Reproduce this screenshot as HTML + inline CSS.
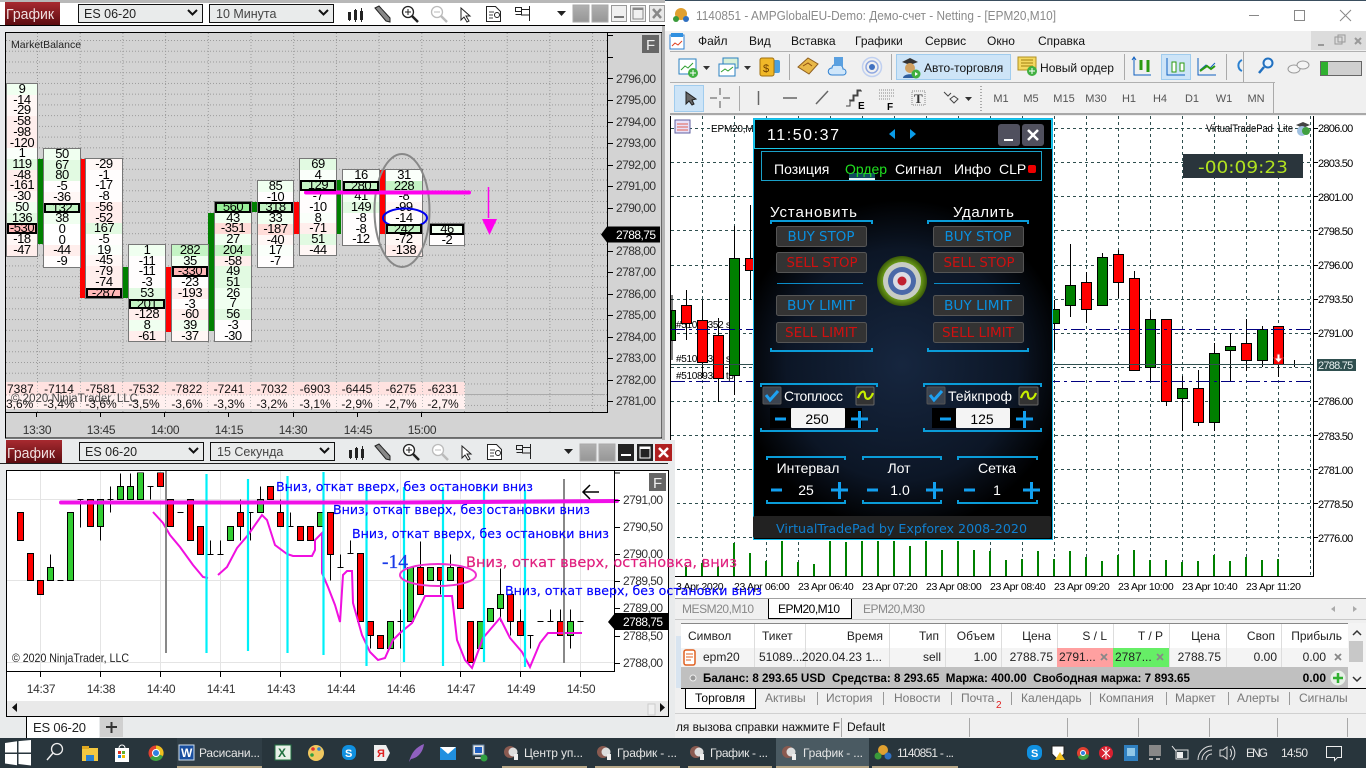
<!DOCTYPE html>
<html><head><meta charset="utf-8"><title>Trading</title>
<style>
html,body{margin:0;padding:0;width:1366px;height:768px;overflow:hidden;background:#f0f0f0}
svg{position:absolute;left:0;top:0}
text{font-family:"Liberation Sans","DejaVu Sans",sans-serif;font-size:12px;fill:#000;white-space:pre}
.ax{font-size:12px;fill:#333;letter-spacing:-.55px}
.tm{font-size:12px;fill:#333;letter-spacing:-.3px;text-anchor:middle}
.sum{font-size:12px;fill:#111;text-anchor:middle}
.mp{font-size:11px;letter-spacing:-.75px;fill:#000}
.dt{font-size:10.5px;letter-spacing:-.35px;fill:#000}
.m{font-size:12px;fill:#111}
.tf{font-size:11px;fill:#555;text-anchor:middle}
.h{font-size:12px;fill:#222;text-anchor:end}
.hl{font-size:12px;fill:#222}
.tab{font-size:12px;fill:#777}
.w{fill:#fff;font-size:14px}
.wc{fill:#fff;font-size:14px;text-anchor:middle}
.bb{fill:#0a90e0;font-size:13px;text-anchor:middle;font-family:"DejaVu Sans",sans-serif}
.br{fill:#d01010;font-size:13px;text-anchor:middle;font-family:"DejaVu Sans",sans-serif}
.tk{fill:#e6e6e6;font-size:12px}
.blue{fill:#0000ff;font-family:"DejaVu Sans",sans-serif;font-size:12px;stroke:#0000ff;stroke-width:.15}
.col{position:absolute;border:1px solid #777;box-sizing:content-box;font:13px/10.73px "Liberation Sans",sans-serif;letter-spacing:-.45px;color:#000;text-align:center;background:#fff}
.col i{display:block;height:10.73px;font-style:normal;white-space:nowrap}
.g0{background:#fafffa}.g1{background:#f0fff0}.g2{background:#e2fae2}.g3{background:#c4f4c4}.g4{background:#98ee98}
.r0{background:#fffdfd}.r1{background:#fff7f5}.r2{background:#ffeeec}.r3{background:#ffdcd8}.r4{background:#ffb8b8}
.col i.x{outline:2px solid #000;outline-offset:-2px;position:relative;z-index:2}
</style></head><body>

<svg width="1366" height="768" viewBox="0 0 1366 768">
<defs>
<radialGradient id="pg" gradientUnits="userSpaceOnUse" cx="902" cy="365" r="165"><stop offset="0" stop-color="#16263f"/><stop offset=".7" stop-color="#0c1626"/><stop offset="1" stop-color="#000"/></radialGradient>
<linearGradient id="rd" x1="0" y1="0" x2="0" y2="1"><stop offset="0" stop-color="#a82a30"/><stop offset="1" stop-color="#5c0c10"/></linearGradient>
<linearGradient id="gs" x1="0" y1="0" x2="0" y2="1"><stop offset="0" stop-color="#b0b0b0"/><stop offset="1" stop-color="#969696"/></linearGradient>
<pattern id="hg" x="6" y="40" width="3" height="10.733" patternUnits="userSpaceOnUse"><rect width="1" height="1" fill="#9a9a9a"/></pattern>
<pattern id="vg" x="37" y="33" width="42.7" height="3" patternUnits="userSpaceOnUse"><rect width="1" height="1" fill="#9a9a9a"/></pattern>
<clipPath id="c1"><rect x="6" y="33" width="601" height="379"/></clipPath>
<clipPath id="c2"><rect x="8" y="472" width="606" height="199"/></clipPath>
<clipPath id="c3"><rect x="676" y="570" width="690" height="30"/></clipPath>
<radialGradient id="tg"><stop offset="0" stop-color="#a0c040"/><stop offset=".75" stop-color="#6a9a18"/><stop offset="1" stop-color="#3a5a08"/></radialGradient>
</defs>

<!-- MT WINDOW -->
<rect x="665" y="0" width="701" height="768" fill="#f0f0f0"/>
<rect x="665" y="0" width="701" height="1" fill="#3a4e5e"/>
<rect x="665" y="1" width="701" height="30" fill="#fff"/>
<circle cx="681" cy="14" r="6" fill="#e0a030"/><circle cx="676" cy="19" r="3" fill="#3a9a3a"/><circle cx="686" cy="19" r="3" fill="#3070c0"/>
<text x="696" y="20" style="font-size:12.5px;fill:#8a8a8a" textLength="360" lengthAdjust="spacingAndGlyphs">1140851 - AMPGlobalEU-Demo: Демо-счет - Netting - [EPM20,M10]</text>
<path d="M1249 15.5h10" stroke="#888" fill="none"/><rect x="1294.5" y="10.5" width="10" height="10" fill="none" stroke="#888"/><path d="M1340 10l11 11M1351 10l-11 11" stroke="#888" fill="none"/>
<!-- menu -->
<rect x="670" y="35" width="14" height="14" fill="#fff" stroke="#3080d0"/><rect x="671" y="33" width="12" height="4" fill="#3090e0"/><path d="M672 46l3-3 3 2 4-4" stroke="#e04020" fill="none"/>
<text class="m" x="698" y="45">Файл</text><text class="m" x="749" y="45">Вид</text><text class="m" x="791" y="45">Вставка</text><text class="m" x="855" y="45">Графики</text><text class="m" x="925" y="45">Сервис</text><text class="m" x="987" y="45">Окно</text><text class="m" x="1038" y="45">Справка</text>
<rect x="1311" y="31" width="55" height="19" fill="#dcdcdc"/><path d="M1318 45h6" stroke="#999" stroke-width="2"/><rect x="1335" y="37" width="7" height="7" fill="none" stroke="#999"/><rect x="1338" y="35" width="7" height="7" fill="none" stroke="#999"/><path d="M1355 38l6 6M1361 38l-6 6" stroke="#999" stroke-width="2"/>
<rect x="670" y="51" width="696" height="1" fill="#b0b0b0"/>
<!-- toolbar1 -->
<rect x="679" y="59" width="17" height="15" fill="#fff" stroke="#2a80c0"/><path d="M681 70l4-4 3 2 5-5" stroke="#30a030" fill="none"/><circle cx="693" cy="73" r="5" fill="#40b040"/><path d="M690 73h6M693 70v6" stroke="#fff"/>
<path d="M703 66h7l-3.500 4z" fill="#333"/>
<rect x="723" y="58" width="15" height="10" fill="#d8f0d8" stroke="#2a80c0"/><rect x="719" y="64" width="16" height="12" fill="#fff" stroke="#2a80c0"/><path d="M721 72l4-3 3 2 5-4" stroke="#30a030" fill="none"/>
<path d="M744 66h7l-3.500 4z" fill="#333"/>
<rect x="768" y="60" width="12" height="13" fill="#4aa0e0" rx="2"/><rect x="760" y="58" width="14" height="18" fill="#f0b828" stroke="#a07010" rx="2"/><text x="763" y="72" style="font-size:11px;fill:#704000">$</text>
<rect x="789" y="54" width="1" height="26" fill="#aaa"/>
<path d="M798 67l10-9 10 6-9 10z" fill="#e8b848" stroke="#906020"/><path d="M803 66l5-3 4 3" stroke="#905010" fill="none"/>
<path d="M832 75c-5 0-5-7 0-7 0-3 3-4 5-3 3-1 6 1 6 4 4 0 4 6 0 6z" fill="#cfe6fa" stroke="#3080d0"/><rect x="834" y="57" width="9" height="9" fill="#5aa0e0"/>
<circle cx="872" cy="67" r="3" fill="#4070c0"/><circle cx="872" cy="67" r="6" fill="none" stroke="#90a8e0" stroke-width="1.500"/><circle cx="872" cy="67" r="9.500" fill="none" stroke="#c0d0f0" stroke-width="1.500"/>
<rect x="891" y="54" width="1" height="26" fill="#aaa"/>
<rect x="896.500" y="54.500" width="114" height="25" fill="#cde4f7" stroke="#a0ccee"/>
<path d="M902 62l8-4 8 4-8 3z" fill="#333"/><circle cx="910" cy="68" r="5" fill="#d0a060"/><path d="M903 78c0-5 14-5 14 0z" fill="#3060a0"/><circle cx="916" cy="74" r="4.500" fill="#40b040"/><path d="M915 72l3 2-3 2z" fill="#fff"/>
<text x="924" y="72" class="m">Авто-торговля</text>
<rect x="1018" y="57" width="18" height="13" fill="#f4d860" stroke="#b09020"/><path d="M1021 60h12M1021 63h12M1021 66h12" stroke="#a08010"/><circle cx="1032" cy="71" r="5" fill="#40b040"/><path d="M1029 71h6M1032 68v6" stroke="#fff"/>
<text x="1040" y="72" class="m" textLength="74" lengthAdjust="spacingAndGlyphs">Новый ордер</text>
<rect x="1124" y="54" width="1" height="26" fill="#aaa"/>
<path d="M1134 58v17h17M1132 60l2-3 2 3" stroke="#1060c0" fill="none"/><path d="M1141 60v10M1148 60v12" stroke="#2a9a10" stroke-width="3"/>
<rect x="1161.500" y="54.500" width="29" height="25" fill="#cde4f7" stroke="#a0ccee"/><path d="M1167 58v17h18" stroke="#1060c0" fill="none"/><rect x="1172" y="62" width="4" height="10" fill="#fff" stroke="#2a9a10"/><rect x="1180" y="63" width="4" height="8" fill="#fff" stroke="#2a9a10"/>
<path d="M1198 58v17h18M1200 70l6-5 4 3 5-5" stroke="#1060c0" fill="none"/><path d="M1200 71l7-5 4 3 4-3" stroke="#2a9a10" stroke-width="2" fill="none"/>
<rect x="1226" y="54" width="1" height="26" fill="#aaa"/>
<path d="M1242 60a6 6 0 0 0 0 11" stroke="#2a80d0" stroke-width="2" fill="none"/>
<rect x="1243" y="52" width="1" height="30" fill="#aaa"/>
<circle cx="1268" cy="63" r="4.500" fill="#e8f4ff" stroke="#2070c0" stroke-width="2"/><path d="M1264 67l-5 6" stroke="#2070c0" stroke-width="2.500"/>
<ellipse cx="1294" cy="69" rx="6" ry="4" fill="#f4f4f4" stroke="#999"/><ellipse cx="1303" cy="65" rx="6" ry="4" fill="#f4f4f4" stroke="#999"/>
<rect x="1320.500" y="61.500" width="41" height="14" fill="#cfcfcf" stroke="#666"/><rect x="1321" y="62" width="7" height="13" fill="#30b030"/>
<!-- toolbar2 -->
<rect x="670" y="82" width="605" height="1" fill="#b0b0b0"/><rect x="1273" y="83" width="1" height="30" fill="#aaa"/>
<rect x="674.500" y="85.500" width="29" height="26" fill="#cde4f7" stroke="#a0ccee"/><path d="M686 92l0 12 3-3 3 4 2-1-2-4 4-1z" fill="#666" stroke="#222"/>
<path d="M710 98h7M723 98h7M720 88v7M720 101v7" stroke="#555" stroke-width="1"/>
<rect x="739" y="86" width="1" height="25" fill="#aaa"/>
<path d="M758.500 91v14M783 98h14M816 104l12-13" stroke="#666" stroke-width="1.500" fill="none"/>
<path d="M846 106h4v-5h4v-5h4v-5h4M849 100h4v-5h4v-5h4" stroke="#444" fill="none"/><text x="858" y="109" style="font-size:10px;font-weight:700">E</text>
<path d="M879 90h15M879 93h15M879 96h15M879 99h12" stroke="#888" stroke-dasharray="1 1"/><text x="887" y="110" style="font-size:10px;font-weight:700">F</text>
<rect x="912" y="91" width="13" height="14" fill="none" stroke="#888" stroke-dasharray="1 1"/><text x="914" y="103" style="font-family:'Liberation Serif';font-size:13px;font-weight:700;fill:#333">T</text>
<path d="M944 92l4 4 3-3M950 99l4 4 4-4-4-3z" stroke="#444" fill="none"/><path d="M965 97h7l-3.500 4z" fill="#333"/>
<path d="M981 86v26" stroke="#aaa" stroke-dasharray="1 2" stroke-width="2"/>
<text class="tf" x="1001" y="102">M1</text><text class="tf" x="1031" y="102">M5</text><text class="tf" x="1064" y="102">M15</text><text class="tf" x="1096" y="102">M30</text><text class="tf" x="1129" y="102">H1</text><text class="tf" x="1160" y="102">H4</text><text class="tf" x="1192" y="102">D1</text><text class="tf" x="1224" y="102">W1</text><text class="tf" x="1256" y="102">MN</text>
<rect x="670" y="113" width="696" height="2" fill="#a8a8a8"/>

<!-- MT CHART -->
<rect x="670" y="116" width="696" height="483" fill="#fff"/>
<rect x="670" y="116" width="1" height="460" fill="#000"/>
<path d="M702.500 116V576M734.500 116V576M766.500 116V576M798.500 116V576M830.500 116V576M862.500 116V576M894.500 116V576M926.500 116V576M958.500 116V576M990.500 116V576M1022.500 116V576M1054.500 116V576M1086.500 116V576M1118.500 116V576M1150.500 116V576M1182.500 116V576M1214.500 116V576M1246.500 116V576M1278.500 116V576M1310.500 116V576M671 128.500H1313M671 162.500H1313M671 196.500H1313M671 230.500H1313M671 265.500H1313M671 299.500H1313M671 333.500H1313M671 367.500H1313M671 401.500H1313M671 435.500H1313M671 469.500H1313M671 503.500H1313M671 537.500H1313" stroke="#2f4f4f" stroke-dasharray="3 3" fill="none"/>
<text x="676" y="328" style="font-size:10px;letter-spacing:-.3px">#51089352 sl</text><text x="676" y="362" style="font-size:10px;letter-spacing:-.3px">#51089352 sl</text><text x="676" y="379" style="font-size:10px;letter-spacing:-.3px">#51089352 tp</text>
<path d="M686.500 290V340M702.500 300V378M718.500 318V402M734.500 226V395M750.500 205V300M1070.500 244V317M1086.500 272V323M1102.500 253V305M1118.500 250V298M1134.500 271V370M1150.500 310V382M1166.500 319V406M1182.500 376V431M1198.500 370V426M1214.500 343V431M1230.500 333V382M1246.500 319V371M1262.500 326V367M1278.500 326V377M1294.500 360V367M1289 364.500H1300M1054.500 300V350M672 295V360" stroke="#000" fill="none"/>
<path d="M681.500 305.500h10v18h-10zM697.500 320.500h10v42h-10zM713.500 335.500h10v43h-10zM745.500 258.500h10v12h-10zM1081.500 282.500h10v27h-10zM1113.500 254.500h10v28h-10zM1129.500 278.500h10v92h-10zM1161.500 319.500h10v82h-10zM1193.500 388.500h10v34h-10zM1241.500 343.500h10v17h-10zM1273.500 326.500h10v38h-10z" fill="#f00" stroke="#000"/>
<path d="M671.500 310.500h4v30h-4zM729.500 258.500h10v117h-10zM1049.500 309.500h10v14h-10zM1065.500 285.500h10v20h-10zM1097.500 257.500h10v48h-10zM1145.500 319.500h10v48h-10zM1177.500 388.500h10v10h-10zM1209.500 353.500h10v69h-10zM1225.500 346.500h10v4h-10zM1257.500 329.500h10v31h-10z" fill="#008000" stroke="#000"/>
<path d="M1274 358h3v-4h3v4h3l-4.500 5z" fill="#fff" stroke="#f02020"/>
<path d="M671 329.500H1313M671 381.500H1313" stroke="#000080" stroke-dasharray="14 4 3 4" fill="none"/>
<path d="M671 364.500H1313" stroke="#2f4f4f" fill="none"/>
<!-- volumes -->
<path d="M686 565V576M702 563V576M718 566V576M734 543V576M750 553V576M766 561V576M782 541V576M798 562V576M814 564V576M830 541V576M846 542V576M862 541V576M878 541V576M894 541V576M910 546V576M926 541V576M942 550V576M958 541V576M974 550V576M990 551V576M1006 560V576M1022 559V576M1038 551V576M1054 559V576M1070 551V576M1086 557V576M1102 561V576M1118 555V576M1134 550V576M1150 560V576M1166 560V576M1182 562V576M1198 561V576M1214 555V576M1230 561V576M1246 557V576M1262 560V576M1278 559V576" stroke="#008000" stroke-width="2" fill="none"/>
<rect x="671" y="576" width="642" height="1" fill="#000"/>
<rect x="1313" y="116" width="1" height="461" fill="#000"/>
<path d="M1313 128.500h5M1313 162.500h5M1313 196.500h5M1313 230.500h5M1313 265.500h5M1313 299.500h5M1313 333.500h5M1313 401.500h5M1313 435.500h5M1313 469.500h5M1313 503.500h5M1313 537.500h5" stroke="#000"/>
<g class="mp"><text class="mp" x="1318" y="132">2806.00</text><text class="mp" x="1318" y="167">2803.50</text><text class="mp" x="1318" y="201">2801.00</text><text class="mp" x="1318" y="235">2798.50</text><text class="mp" x="1318" y="269">2796.00</text><text class="mp" x="1318" y="303">2793.50</text><text class="mp" x="1318" y="337">2791.00</text><text class="mp" x="1318" y="405">2786.00</text><text class="mp" x="1318" y="440">2783.50</text><text class="mp" x="1318" y="474">2781.00</text><text class="mp" x="1318" y="508">2778.50</text><text class="mp" x="1318" y="542">2776.00</text></g>
<rect x="1317" y="359" width="39" height="12" fill="#2f4f4f"/><text class="mp" x="1318" y="369" style="fill:#e8f0f0">2788.75</text>
<g clip-path="url(#c3)"><text class="dt" x="676" y="590">3 Apr 2020</text></g>
<text class="dt" x="734" y="590">23 Apr 06:00</text><text class="dt" x="798" y="590">23 Apr 06:40</text><text class="dt" x="862" y="590">23 Apr 07:20</text><text class="dt" x="926" y="590">23 Apr 08:00</text><text class="dt" x="990" y="590">23 Apr 08:40</text><text class="dt" x="1054" y="590">23 Apr 09:20</text><text class="dt" x="1118" y="590">23 Apr 10:00</text><text class="dt" x="1182" y="590">23 Apr 10:40</text><text class="dt" x="1246" y="590">23 Apr 11:20</text>
<rect x="675" y="120" width="15" height="13" fill="#e8e0f8" stroke="#6060a0"/><path d="M677 124h11M677 127h11M677 130h11" stroke="#e06050"/>
<text x="711" y="132" style="font-size:10px;letter-spacing:-.2px">EPM20,M10</text>
<text x="1206" y="132" textLength="87" lengthAdjust="spacingAndGlyphs" style="font-size:11px">VirtualTradePad  Lite</text>
<path d="M1296 125l7-3 7 3-7 3z" fill="#444"/><circle cx="1302" cy="131" r="5" fill="#a0c0e0"/><circle cx="1306" cy="131" r="4" fill="#40a040"/>
<rect x="1183" y="154" width="120" height="24" fill="#2a353c"/>
<text x="1198" y="173" style="font-family:'DejaVu Sans',sans-serif;font-size:17px;fill:#b0e020" textLength="90" lengthAdjust="spacingAndGlyphs">-00:09:23</text>

<!-- PANEL -->
<rect x="753.500" y="118.500" width="299" height="421" fill="url(#pg)" stroke="#12b8e8"/>
<rect x="754.500" y="119.500" width="297" height="29" fill="#000" stroke="#18c8e8"/>
<text x="767" y="140" style="font-size:16px;fill:#fff" textLength="72">11:50:37</text>
<path d="M889 134l6-5v10zM916 134l-6-5v10z" fill="#0a9ce8"/>
<rect x="998" y="124" width="22" height="22" rx="3" fill="#50505e"/><rect x="1004" y="139" width="9" height="2" fill="#fff"/>
<rect x="1022" y="124" width="22" height="22" rx="3" fill="#50505e"/><path d="M1028 130l10 10M1038 130l-10 10" stroke="#fff" stroke-width="2.500"/>
<rect x="761.500" y="151.500" width="280" height="29" fill="#000" stroke="#1aa0c8"/>
<rect x="849" y="173" width="26" height="6" fill="#124a5e"/><rect x="849" y="178" width="26" height="2" fill="#e8f4f8"/>
<g style="font-size:14px"><text class="w" x="774" y="174">Позиция</text><text x="845" y="174" style="font-size:14px;fill:#20e020">Ордер</text><text class="w" x="895" y="174">Сигнал</text><text class="w" x="954" y="174">Инфо</text><text class="w" x="999" y="174">CLP</text></g>
<rect x="1028" y="165" width="8" height="8" rx="2" fill="#f00000"/>
<text class="w" x="770" y="217" style="font-size:15px" textLength="87">Установить</text><text class="w" x="953" y="217" style="font-size:15px" textLength="61">Удалить</text>
<path d="M771 224v-3h101v3M928 224v-3h100v3M771 348v3h101v-3M928 348v3h100v-3M761 387v-3h116v3M924 387v-3h117v3M761 428v3h116v-3M924 428v3h117v-3M767 460v-3h78v3M863 460v-3h78v3M958 460v-3h79v3M767 500v3h78v-3M863 500v3h78v-3M958 500v3h79v-3" stroke="#0a9cd8" stroke-width="2" fill="none"/>
<path d="M777 283.500h86M934 283.500h86" stroke="#0a8cc8" fill="none"/>
<g fill="#333" stroke="#555"><rect x="776.500" y="226.500" width="90" height="20" rx="2"/><rect x="776.500" y="252.500" width="90" height="20" rx="2"/><rect x="776.500" y="295.500" width="90" height="20" rx="2"/><rect x="776.500" y="322.500" width="90" height="20" rx="2"/><rect x="933.500" y="226.500" width="90" height="20" rx="2"/><rect x="933.500" y="252.500" width="90" height="20" rx="2"/><rect x="933.500" y="295.500" width="90" height="20" rx="2"/><rect x="933.500" y="322.500" width="90" height="20" rx="2"/></g>
<text class="bb" x="821" y="241" textLength="67" lengthAdjust="spacingAndGlyphs">BUY STOP</text><text class="br" x="822" y="267" textLength="71" lengthAdjust="spacingAndGlyphs">SELL STOP</text><text class="bb" x="821" y="310" textLength="68" lengthAdjust="spacingAndGlyphs">BUY LIMIT</text><text class="br" x="821" y="337" textLength="72" lengthAdjust="spacingAndGlyphs">SELL LIMIT</text>
<text class="bb" x="978" y="241" textLength="67" lengthAdjust="spacingAndGlyphs">BUY STOP</text><text class="br" x="979" y="267" textLength="71" lengthAdjust="spacingAndGlyphs">SELL STOP</text><text class="bb" x="978" y="310" textLength="68" lengthAdjust="spacingAndGlyphs">BUY LIMIT</text><text class="br" x="978" y="337" textLength="72" lengthAdjust="spacingAndGlyphs">SELL LIMIT</text>
<circle cx="902" cy="281" r="25" fill="url(#tg)"/><circle cx="902" cy="281" r="19" fill="#c8ccc4"/><circle cx="902" cy="281" r="14" fill="#4a68a8"/><circle cx="902" cy="281" r="9" fill="#dcdce4"/><circle cx="902" cy="281" r="4.500" fill="#c02030"/>
<!-- sl/tp -->
<rect x="763" y="387" width="18" height="17" rx="1" fill="#3c4450" stroke="#555"/><path d="M766 395l4 5 8-9" stroke="#1ea0f0" stroke-width="3" fill="none"/>
<text class="w" x="784" y="401" textLength="59">Стоплосс</text>
<rect x="856" y="387" width="18" height="18" rx="1" fill="#333" stroke="#666"/><path d="M858 398c3-8 7-8 7-3s5 6 8-2" stroke="#c8f000" stroke-width="2.200" fill="none"/>
<rect x="927" y="387" width="18" height="17" rx="1" fill="#3c4450" stroke="#555"/><path d="M930 395l4 5 8-9" stroke="#1ea0f0" stroke-width="3" fill="none"/>
<text class="w" x="948" y="401" textLength="64">Тейкпроф</text>
<rect x="1019" y="387" width="19" height="18" rx="1" fill="#333" stroke="#666"/><path d="M1021 398c3-8 7-8 7-3s5 6 8-2" stroke="#c8f000" stroke-width="2.200" fill="none"/>
<rect x="770" y="408" width="92" height="20" fill="#000"/><rect x="932" y="408" width="92" height="20" fill="#000"/>
<rect x="791" y="408" width="54" height="20" rx="1" fill="#f4f4f4"/><rect x="956" y="408" width="54" height="20" rx="1" fill="#f4f4f4"/>
<text x="817" y="424" text-anchor="middle" style="font-size:14px">250</text><text x="982" y="424" text-anchor="middle" style="font-size:14px">125</text>
<path d="M775 419h11M851 419h17M859.500 411v17M940 419h11M1016 419h17M1024.500 411v17M771 490h11M831 490h17M839.500 482v17M867 490h11M926 490h17M934.500 482v17M964 490h11M1023 490h17M1031.500 482v17" stroke="#12a0f0" stroke-width="3" fill="none"/>
<text class="wc" x="808" y="473">Интервал</text><text class="wc" x="899" y="473">Лот</text><text class="wc" x="997" y="473">Сетка</text>
<text class="wc" x="806" y="495">25</text><text class="wc" x="900" y="495">1.0</text><text class="wc" x="997" y="495">1</text>
<rect x="753" y="516" width="298" height="22" rx="2" fill="#222"/>
<text x="776" y="533" style="font-family:'DejaVu Sans',sans-serif;font-size:12.5px;fill:#1080d0" textLength="251" lengthAdjust="spacingAndGlyphs">VirtualTradePad by Expforex 2008-2020</text>

<!-- MT bottom panel -->
<rect x="670" y="598" width="696" height="1" fill="#a0a0a0"/>
<rect x="670" y="599" width="696" height="20" fill="#f0f0f0"/>
<text x="682" y="613" style="font-size:12px;fill:#888" textLength="72">MESM20,M10</text>
<path d="M768 599h83v19h-83z" fill="#fff"/><path d="M768.500 599v19.500h83V599" fill="none" stroke="#000"/>
<text x="778" y="613" textLength="62">EPM20,M10</text>
<text x="863" y="613" style="fill:#888" textLength="62">EPM20,M30</text>
<path d="M1335 606l-4 3 4 3zM1353 606l4 3-4 3z" fill="#aaa"/>
<rect x="670" y="619" width="696" height="1" fill="#c8c8c8"/>
<rect x="681" y="623" width="667" height="25" fill="#fff"/>
<rect x="681" y="648" width="667" height="19" fill="#f4f4f4"/>
<path d="M754.500 623V667M805.500 623V667M889.500 623V667M945.500 623V667M1001.500 623V667M1057.500 623V667M1113.500 623V667M1169.500 623V667M1226.500 623V667M1281.500 623V667" stroke="#ddd" fill="none"/>
<rect x="681" y="623" width="685" height="1" fill="#888"/>
<text class="hl" x="688" y="640">Символ</text><text class="hl" x="762" y="640">Тикет</text><text class="h" x="883" y="640">Время</text><text class="h" x="939" y="640">Тип</text><text class="h" x="995" y="640">Объем</text><text class="h" x="1051" y="640">Цена</text><text class="h" x="1107" y="640">S / L</text><text class="h" x="1163" y="640">T / P</text><text class="h" x="1220" y="640">Цена</text><text class="h" x="1275" y="640">Своп</text><text class="h" x="1342" y="640">Прибыль</text>
<rect x="1057" y="648" width="56" height="19" fill="#ffa0a0"/><rect x="1113" y="648" width="56" height="19" fill="#66ee66"/>
<rect x="684" y="650" width="11" height="15" rx="2" fill="#fff" stroke="#e06020" stroke-width="1.500"/><path d="M686 654h7M686 657h7M686 660h5" stroke="#e06020"/>
<text class="hl" x="703" y="661">epm20</text><text class="hl" x="759" y="661">51089...</text><text class="h" x="882" y="661">2020.04.23 1...</text><text class="h" x="941" y="661">sell</text><text class="h" x="997" y="661">1.00</text><text class="h" x="1053" y="661">2788.75</text><text class="hl" x="1059" y="661">2791...</text><text class="hl" x="1115" y="661">2787...</text><text class="h" x="1221" y="661">2788.75</text><text class="h" x="1277" y="661">0.00</text><text class="h" x="1326" y="661">0.00</text>
<path d="M1101 654l6 6M1107 654l-6 6M1157 654l6 6M1163 654l-6 6M1335 654l6 6M1341 654l-6 6" stroke="#888" stroke-width="1.800"/>
<rect x="681" y="667" width="667" height="21" fill="#c0c0c0"/>
<rect x="681" y="688" width="685" height="1" fill="#000"/>
<circle cx="693" cy="678" r="3" fill="#999" stroke="#eee"/>
<text x="703" y="682" style="font-weight:700;font-size:12px" textLength="487" lengthAdjust="spacingAndGlyphs">Баланс: 8 293.65 USD  Средства: 8 293.65  Маржа: 400.00  Свободная маржа: 7 893.65</text>
<text class="h" x="1326" y="682" style="font-weight:700;fill:#000">0.00</text>
<circle cx="1338" cy="678" r="7.500" fill="#e8f0e8"/><path d="M1333 678h10M1338 673v10" stroke="#30b030" stroke-width="2.500"/>
<rect x="1348" y="623" width="18" height="65" fill="#f4f4f4"/><path d="M1353 635l4-4 4 4M1353 677l4 4 4-4" stroke="#333" stroke-width="1.500" fill="none"/><rect x="1349" y="641" width="14" height="21" fill="#c8c8c8"/>
<rect x="676" y="636" width="5" height="52" fill="#d8e4f0"/>
<rect x="670" y="689" width="696" height="24" fill="#f0f0f0"/>
<path d="M685 689h70v19h-70z" fill="#fff"/><path d="M685.500 689v19.500h70V689" fill="none" stroke="#000"/>
<text x="695" y="702">Торговля</text><text class="tab" x="765" y="702">Активы</text><text class="tab" x="826" y="702">История</text><text class="tab" x="894" y="702">Новости</text><text class="tab" x="961" y="702">Почта</text><text x="996" y="708" style="font-size:10px;fill:#e02020">2</text><text class="tab" x="1021" y="702">Календарь</text><text class="tab" x="1099" y="702">Компания</text><text class="tab" x="1175" y="702">Маркет</text><text class="tab" x="1237" y="702">Алерты</text><text class="tab" x="1299" y="702">Сигналы</text>
<path d="M817.500 692v13M883.500 692v13M951.500 692v13M1011.500 692v13M1090.500 692v13M1166.500 692v13M1228.500 692v13M1289.500 692v13" stroke="#999"/>
<rect x="670" y="713" width="696" height="1" fill="#d0d0d0"/>
<text x="676" y="731" style="font-size:12px;fill:#111" textLength="164" lengthAdjust="spacingAndGlyphs">ля вызова справки нажмите F</text><text x="847" y="731" style="fill:#111">Default</text>
<path d="M841.500 718v19M969.500 718v19M1067.500 718v19M1138.500 718v19M1209.500 718v19M1277.500 718v19M1347.500 718v19" stroke="#a8a8a8"/>

<!-- TOP LEFT WINDOW -->
<rect x="0" y="0" width="665" height="440" fill="#e9eaec"/>
<rect x="0" y="0" width="665" height="3" fill="#b8b8b8"/>
<rect x="0" y="3" width="665" height="22" fill="#fff"/>
<rect x="0" y="25" width="665" height="1" fill="#000"/>
<rect x="0" y="2" width="60" height="23" fill="url(#rd)"/><rect x="0" y="2" width="5" height="23" fill="#fff"/>
<text x="6" y="19" style="font-size:15px;fill:#f0e0e0" textLength="48" lengthAdjust="spacingAndGlyphs">График</text>
<rect x="78.500" y="4.500" width="124" height="18" fill="#e9ebeb" stroke="#111"/><text x="84" y="18" style="font-size:12.500px;fill:#222">ES 06-20</text><path d="M188 10l4.500 4.500L197 10" stroke="#111" stroke-width="2" fill="none"/>
<rect x="209.500" y="4.500" width="124" height="18" fill="#e9ebeb" stroke="#111"/><text x="216" y="18" style="font-size:12.500px;fill:#444">10 Минута</text><path d="M319 10l4.500 4.500L328 10" stroke="#111" stroke-width="2" fill="none"/>
<!-- toolbar icons -->
<path d="M349.500 12v9M355.500 9v13M361.500 8v14" stroke="#222" fill="none"/><path d="M348 12h3v8h-3zM354 10h3v10h-3zM360 11h3v9h-3z" fill="#222"/>
<path d="M375 8l4-2 11 12 0 4-4-1z" fill="#888" stroke="#222"/>
<circle cx="408" cy="12" r="5.500" fill="#fff" stroke="#222" stroke-width="1.300"/><path d="M405 12h6M408 9v6" stroke="#222"/><path d="M412 16l6 6" stroke="#222" stroke-width="2.500"/>
<circle cx="437" cy="12" r="5.500" fill="#fff" stroke="#bbb" stroke-width="1.300"/><path d="M434 12h6" stroke="#bbb"/><path d="M441 16l6 6" stroke="#bbb" stroke-width="2.500"/>
<path d="M461 8v12l3-3 3 5 2-1-3-5h4z" fill="#fff" stroke="#222"/>
<path d="M486.500 6.500h9l5 5v10h-14z" fill="#fff" stroke="#222"/><path d="M489 12h5M489 15h4M489 18h4" stroke="#444"/><circle cx="497" cy="15" r="2.500" fill="#fff" stroke="#222"/>
<path d="M515.500 7.500h6v4h-6zM515.500 14.500h6v-3M521 9.500h8M529.500 6v15M521 15h8" stroke="#222" fill="none"/>
<path d="M557 11h9l-4.500 5z" fill="#222"/>
<rect x="573" y="5" width="16" height="17" fill="url(#gs)" stroke="#aaa"/><rect x="592" y="5" width="16" height="17" fill="url(#gs)" stroke="#aaa"/>
<rect x="611.500" y="5.500" width="15" height="16" fill="#f0f0f0" stroke="#999"/><rect x="614" y="16" width="10" height="2" fill="#777"/>
<rect x="630.500" y="5.500" width="15" height="16" fill="#f0f0f0" stroke="#999"/><rect x="633" y="8" width="10" height="11" fill="none" stroke="#888"/><rect x="633" y="8" width="10" height="2" fill="#888"/>
<rect x="649.500" y="5.500" width="15" height="16" fill="#e8e8e8" stroke="#999"/><path d="M653 9l8 9M661 9l-8 9" stroke="#888" stroke-width="2.500"/>
<!-- chart 1 -->
<rect x="5.500" y="32.500" width="656.500" height="405.500" fill="#d3d3d3" stroke="#000"/>
<rect x="6" y="40" width="601" height="372" fill="url(#hg)"/>
<rect x="6" y="33" width="601" height="379" fill="url(#vg)"/>
<rect x="607" y="33" width="1" height="380" fill="#000"/><rect x="6" y="412" width="602" height="1" fill="#000"/>
<rect x="662" y="26" width="3" height="414" fill="#b5b5b5"/>
<path d="M608 35.500h5M608 57.500h5M608 78.500h5M608 100.500h5M608 122.500h5M608 143.500h5M608 165.500h5M608 186.500h5M608 208.500h5M608 251.500h5M608 272.500h5M608 294.500h5M608 315.500h5M608 337.500h5M608 358.500h5M608 380.500h5M608 401.500h5M36.500 413v4M100.500 413v4M164.500 413v4M228.500 413v4M293.500 413v4M357.500 413v4M421.500 413v4" stroke="#000"/>
<text class="ax" x="616" y="83">2796,00</text><text class="ax" x="616" y="104">2795,00</text><text class="ax" x="616" y="126">2794,00</text><text class="ax" x="616" y="147">2793,00</text><text class="ax" x="616" y="169">2792,00</text><text class="ax" x="616" y="190">2791,00</text><text class="ax" x="616" y="212">2790,00</text><text class="ax" x="616" y="255">2788,00</text><text class="ax" x="616" y="276">2787,00</text><text class="ax" x="616" y="298">2786,00</text><text class="ax" x="616" y="319">2785,00</text><text class="ax" x="616" y="341">2784,00</text><text class="ax" x="616" y="362">2783,00</text><text class="ax" x="616" y="384">2782,00</text><text class="ax" x="616" y="405">2781,00</text>
<path d="M601 234.500l6-8h53v16h-53z" fill="#000"/><text class="ax" x="616" y="239" style="fill:#fff">2788,75</text>
<rect x="642" y="35" width="17" height="18" fill="#666"/><text x="646" y="50" style="font-size:15px;fill:#eee">F</text>
<text class="tm" x="37" y="434">13:30</text><text class="tm" x="101" y="434">13:45</text><text class="tm" x="165" y="434">14:00</text><text class="tm" x="229" y="434">14:15</text><text class="tm" x="293" y="434">14:30</text><text class="tm" x="358" y="434">14:45</text><text class="tm" x="422" y="434">15:00</text>
<text x="11" y="48" style="font-size:10.500px;fill:#222">MarketBalance</text>
<!-- summary -->
<rect x="6" y="382" width="459" height="13" fill="#ffe2e0"/><rect x="6" y="395" width="459" height="14" fill="#fff0ef"/>
<path d="M37.500 382v27M80.500 382v27M122.500 382v27M165.500 382v27M207.500 382v27M250.500 382v27M293.500 382v27M336.500 382v27M378.500 382v27M422.500 382v27M464.500 382v27M6 395h459" stroke="#bbb" stroke-dasharray="1 2" fill="none"/>
<rect x="465" y="394" width="140" height="1" fill="#aaa"/>
<text x="7" y="393" style="font-size:12px;fill:#111">7387</text><text class="sum" x="59" y="393">-7114</text><text class="sum" x="101" y="393">-7581</text><text class="sum" x="144" y="393">-7532</text><text class="sum" x="187" y="393">-7822</text><text class="sum" x="229" y="393">-7241</text><text class="sum" x="272" y="393">-7032</text><text class="sum" x="315" y="393">-6903</text><text class="sum" x="357" y="393">-6445</text><text class="sum" x="401" y="393">-6275</text><text class="sum" x="443" y="393">-6231</text>
<text x="6" y="408" style="font-size:12px;fill:#111">3,6%</text><text class="sum" x="59" y="408">-3,4%</text><text class="sum" x="101" y="408">-3,6%</text><text class="sum" x="144" y="408">-3,5%</text><text class="sum" x="187" y="408">-3,6%</text><text class="sum" x="229" y="408">-3,3%</text><text class="sum" x="272" y="408">-3,2%</text><text class="sum" x="315" y="408">-3,1%</text><text class="sum" x="357" y="408">-2,9%</text><text class="sum" x="401" y="408">-2,7%</text><text class="sum" x="443" y="408">-2,7%</text>
<text x="11" y="402" style="font-size:11.500px;fill:#444">© 2020 NinjaTrader, LLC</text>
<!-- bars -->
<rect x="38" y="159" width="5" height="85" fill="#008000"/><rect x="80" y="159" width="5" height="139" fill="#f00"/><rect x="122" y="267" width="6" height="31" fill="#008000"/><rect x="165" y="267" width="6" height="65" fill="#f00"/><rect x="208" y="213" width="6" height="118" fill="#008000"/><rect x="251" y="202" width="6" height="10" fill="#008000"/><rect x="293" y="202" width="6" height="32" fill="#f00"/><rect x="336" y="180" width="5" height="54" fill="#008000"/><rect x="379" y="170" width="6" height="64" fill="#f00"/>
</svg>

<!-- FOOTPRINT -->
<div class="col" style="left:6px;top:83px;width:30px"><i class="g1">9</i><i class="r1">-14</i><i class="r1">-29</i><i class="r2">-58</i><i class="r2">-98</i><i class="r2">-120</i><i class="g0">1</i><i class="g2">119</i><i class="r2">-48</i><i class="r2">-161</i><i class="r1">-30</i><i class="g1">50</i><i class="g2">136</i><i class="r4 x">-530</i><i class="r1">-18</i><i class="r2">-47</i></div>
<div class="col" style="left:43px;top:148px;width:36px"><i class="g1">50</i><i class="g2">67</i><i class="g2">80</i><i class="r0">-5</i><i class="r1">-36</i><i class="g3 x">132</i><i class="g1">38</i><i>0</i><i>0</i><i class="r2">-44</i><i class="r0">-9</i></div>
<div class="col" style="left:85px;top:158px;width:36px"><i class="r1">-29</i><i class="r0">-1</i><i class="r0">-17</i><i class="r0">-8</i><i class="r2">-56</i><i class="r2">-52</i><i class="g2">167</i><i class="r0">-5</i><i class="g0">19</i><i class="r1">-45</i><i class="r2">-79</i><i class="r2">-74</i><i class="r4 x">-287</i></div>
<div class="col" style="left:128px;top:244px;width:36px"><i class="g1">1</i><i class="r0">-11</i><i class="r0">-11</i><i class="r0">-3</i><i class="g2">53</i><i class="g3 x">201</i><i class="r2">-128</i><i class="g1">8</i><i class="r2">-61</i></div>
<div class="col" style="left:171px;top:244px;width:36px"><i class="g3">282</i><i class="g1">35</i><i class="r4 x">-330</i><i class="r0">-23</i><i class="r2">-193</i><i class="r0">-3</i><i class="r2">-60</i><i class="g1">39</i><i class="r1">-37</i></div>
<div class="col" style="left:214px;top:201px;width:36px"><i class="g4 x">560</i><i class="g1">43</i><i class="r3">-351</i><i class="g1">27</i><i class="g3">204</i><i class="r2">-58</i><i class="g2">49</i><i class="g2">51</i><i class="g1">26</i><i class="g1">7</i><i class="g2">56</i><i class="r0">-3</i><i class="r0">-30</i></div>
<div class="col" style="left:257px;top:180px;width:35px"><i class="g1">85</i><i class="r0">-10</i><i class="g3 x">318</i><i class="g1">33</i><i class="r3">-187</i><i class="r1">-40</i><i class="g0">17</i><i class="r0">-7</i></div>
<div class="col" style="left:299px;top:158px;width:36px"><i class="g2">69</i><i class="g0">4</i><i class="g3 x">129</i><i class="r0">-7</i><i class="r0">-10</i><i class="g0">8</i><i class="r2">-71</i><i class="g2">51</i><i class="r1">-44</i></div>
<div class="col" style="left:342px;top:169px;width:36px"><i class="g0">16</i><i class="g3 x">280</i><i class="g1">41</i><i class="g2">149</i><i class="r0">-8</i><i class="r0">-8</i><i class="r0">-12</i></div>
<div class="col" style="left:385px;top:169px;width:36px"><i class="g0">31</i><i class="g3">228</i><i class="r0">-8</i><i class="r1">-99</i><i class="r0">-14</i><i class="g3 x">242</i><i class="r1">-72</i><i class="r2">-138</i></div>
<div class="col" style="left:429px;top:223px;width:34px"><i class="g1 x">46</i><i class="r0">-2</i></div>

<svg width="1366" height="768" viewBox="0 0 1366 768">
<!-- overlays on chart 1 -->
<ellipse cx="402" cy="210.500" rx="27.500" ry="56.500" fill="none" stroke="#888" stroke-width="2"/>
<ellipse cx="405" cy="218" rx="22" ry="9.500" fill="none" stroke="#0000f0" stroke-width="2"/>
<path d="M306 192.500H469" stroke="#ff00ee" stroke-width="4" stroke-linecap="round"/>
<path d="M488.500 187V218" stroke="#ff00ee" stroke-width="1.500"/><path d="M482 219h15l-7.500 16z" fill="#ff00ee"/>

<!-- LOWER WINDOW -->
<rect x="0" y="440" width="675" height="298" fill="#e9ebec"/>
<rect x="0" y="463" width="668" height="1" fill="#222"/>
<rect x="0" y="440" width="62" height="23" fill="url(#rd)"/><rect x="0" y="440" width="6" height="23" fill="#e9ebec"/>
<text x="7" y="458" style="font-size:15px;fill:#f0e0e0" textLength="48" lengthAdjust="spacingAndGlyphs">График</text>
<rect x="79.500" y="442.500" width="124" height="18" fill="#e9ebeb" stroke="#111"/><text x="85" y="456" style="font-size:12.500px;fill:#222">ES 06-20</text><path d="M189 448l4.500 4.500L198 448" stroke="#111" stroke-width="2" fill="none"/>
<rect x="210.500" y="442.500" width="124" height="18" fill="#e9ebeb" stroke="#111"/><text x="217" y="456" style="font-size:12.500px;fill:#444">15 Секунда</text><path d="M320 448l4.500 4.500L329 448" stroke="#111" stroke-width="2" fill="none"/>
<path d="M350.500 450v9M356.500 447v13M362.500 446v14" stroke="#222" fill="none"/><path d="M349 450h3v8h-3zM355 448h3v10h-3zM361 449h3v9h-3z" fill="#222"/>
<path d="M375 446l4-2 11 12 0 4-4-1z" fill="#888" stroke="#222"/>
<circle cx="409" cy="450" r="5.500" fill="#fff" stroke="#222" stroke-width="1.300"/><path d="M406 450h6M409 447v6" stroke="#222"/><path d="M413 454l6 6" stroke="#222" stroke-width="2.500"/>
<circle cx="438" cy="450" r="5.500" fill="#fff" stroke="#bbb" stroke-width="1.300"/><path d="M435 450h6" stroke="#bbb"/><path d="M442 454l6 6" stroke="#bbb" stroke-width="2.500"/>
<path d="M462 446v12l3-3 3 5 2-1-3-5h4z" fill="#fff" stroke="#222"/>
<path d="M487.500 444.500h9l5 5v10h-14z" fill="#fff" stroke="#222"/><path d="M490 450h5M490 453h4M490 456h4" stroke="#444"/><circle cx="498" cy="453" r="2.500" fill="#fff" stroke="#222"/>
<path d="M516.500 445.500h6v4h-6zM516.500 452.500h6v-3M522 447.500h8M530.500 444v15M522 453h8" stroke="#222" fill="none"/>
<path d="M564 449h9l-4.500 5z" fill="#222"/>
<rect x="580" y="444" width="16" height="17" fill="url(#gs)" stroke="#aaa"/><rect x="599" y="444" width="16" height="17" fill="url(#gs)" stroke="#aaa"/>
<rect x="618" y="444" width="16" height="17" fill="#222"/><rect x="621" y="454" width="10" height="2" fill="#fff"/>
<rect x="637" y="444" width="16" height="17" fill="#222"/><rect x="640" y="447" width="10" height="11" fill="none" stroke="#fff"/><rect x="640" y="447" width="10" height="2" fill="#fff"/>
<rect x="655" y="444" width="17" height="17" fill="#b02020"/><path d="M659 448l9 9M668 448l-9 9" stroke="#fff" stroke-width="2.500"/>
<!-- chart 2 -->
<rect x="6.500" y="470.500" width="662" height="246" fill="#fff" stroke="#000"/>
<rect x="7" y="701" width="661" height="15" fill="#e9e9e9"/>
<path d="M17 703v9l-5-4.500z" fill="#111"/><rect x="648" y="704" width="7" height="11" fill="#f0f0f0" stroke="#ccc"/><path d="M660 703v9l5-4.500z" fill="#111"/>
<path d="M7 499.500H614M7 580.500H614M7 662.500H614M40.500 471V671M100.500 471V671M160.500 471V671M220.500 471V671M280.500 471V671M340.500 471V671M400.500 471V671M460.500 471V671M520.500 471V671M580.500 471V671" stroke="#e4e4e4" fill="none"/>
<g clip-path="url(#c2)" transform="translate(.5 .5)">
<path d="M50 554V567M100 526V540M120 473V486M130 473V486M240 499V540M260 486V499M280 499V512M330 554V580M370 635V648M420 541V567M440 580V594M450 554V567M500 568V621M510 621V635M520 609V621M560 609V621M570 609V648M57 580H63M80 499V527M77 499H83M110 486V512M107 499H113M150 486V499M147 486H153M177 512H183M210 540V554M207 554H213M220 540V554M217 554H223M250 512V540M247 512H253M290 512V526M287 526H293M340 554V567M337 567H343M350 540V553M347 553H353M400 609V648M397 621H403M530 635V648M527 635H533M537 621H543M550 609V621M547 621H553M577 621H583" stroke="#000" fill="none"/>
<path d="M17 512h6v28h-6zM27 553h6v27h-6zM37 580h6v14h-6zM87 499h6v27h-6zM157 472h6v14h-6zM167 499h6v27h-6zM187 499h6v41h-6zM197 526h6v28h-6zM237 512h6v14h-6zM267 486h6v13h-6zM277 512h6v14h-6zM297 526h6v14h-6zM307 526h6v14h-6zM327 512h6v42h-6zM357 553h6v68h-6zM367 621h6v14h-6zM377 635h6v13h-6zM417 567h6v27h-6zM437 567h6v13h-6zM457 567h6v41h-6zM467 621h6v41h-6zM507 594h6v27h-6zM517 621h6v14h-6zM557 621h6v14h-6z" fill="#f00" stroke="#000"/>
<path d="M47 567h6v13h-6zM67 512h6v68h-6zM97 499h6v27h-6zM117 486h6v13h-6zM127 486h6v13h-6zM137 472h6v27h-6zM227 526h6v14h-6zM257 499h6v13h-6zM317 512h6v14h-6zM387 621h6v27h-6zM407 567h6v54h-6zM427 567h6v13h-6zM447 567h6v13h-6zM477 621h6v27h-6zM487 608h6v13h-6zM497 594h6v14h-6zM567 621h6v14h-6z" fill="#32cd32" stroke="#000"/>
</g>
<path d="M153 512L163 523L170 535L180 547L193 565L203 577L208 578M218 575L227 567L237 548L248 535L262 515L267 520L275 545L287 554L293 556L312 556L315 550L315 540L322 533L322 573L328 587L335 605L340 622L343 575L347 571L352 571L353 603L362 635L370 652L378 660L385 658L393 640L400 633L412 623L425 596L452 596L457 640L465 660L472 668L483 638L500 618L510 638L522 652L530 667L540 643L548 633L582 633" fill="none" stroke="#f010e0" stroke-width="2"/>
<path d="M206.500 474V653M248 479V651M287.500 476V653M323.500 472V655M366.500 487V666M404 487V662M443 487V666M484 487V662M525 490V667" stroke="#00f0f8" stroke-width="2.200" fill="none"/>
<path d="M166 471V653M564 479V663" stroke="#888" stroke-width="2" fill="none"/>
<path d="M61 502.500H400L617 501" stroke="#f010e8" stroke-width="4" stroke-linecap="round" fill="none"/>
<rect x="614" y="470" width="1" height="201" fill="#000"/><rect x="7" y="671" width="608" height="1" fill="#000"/>
<path d="M615 473h5M615 500.500h5M615 527.500h5M615 554.500h5M615 581.500h5M615 608.500h5M615 636.500h5M615 663.500h5M40.500 672v5M100.500 672v5M160.500 672v5M220.500 672v5M280.500 672v5M340.500 672v5M400.500 672v5M460.500 672v5M520.500 672v5M580.500 672v5" stroke="#000"/>
<text class="ax" x="623" y="504">2791,00</text><text class="ax" x="623" y="531">2790,50</text><text class="ax" x="623" y="558">2790,00</text><text class="ax" x="623" y="585">2789,50</text><text class="ax" x="623" y="612">2789,00</text><text class="ax" x="623" y="640">2788,50</text><text class="ax" x="623" y="667">2788,00</text>
<path d="M608 622l7-9h53v17h-53z" fill="#000"/><text class="ax" x="623" y="626" style="fill:#fff">2788,75</text>
<rect x="649" y="473" width="17" height="18" fill="#666"/><text x="653" y="488" style="font-size:15px;fill:#eee">F</text>
<text class="tm" x="41" y="693">14:37</text><text class="tm" x="101" y="693">14:38</text><text class="tm" x="161" y="693">14:40</text><text class="tm" x="221" y="693">14:41</text><text class="tm" x="281" y="693">14:43</text><text class="tm" x="341" y="693">14:44</text><text class="tm" x="401" y="693">14:46</text><text class="tm" x="461" y="693">14:47</text><text class="tm" x="521" y="693">14:49</text><text class="tm" x="581" y="693">14:50</text>
<text x="12" y="662" style="font-size:12px;fill:#222" textLength="117" lengthAdjust="spacingAndGlyphs">© 2020 NinjaTrader, LLC</text>
<text class="blue" x="276" y="491" textLength="257" lengthAdjust="spacingAndGlyphs">Вниз, откат вверх, без остановки вниз</text>
<text class="blue" x="333" y="514" textLength="257" lengthAdjust="spacingAndGlyphs">Вниз, откат вверх, без остановки вниз</text>
<text class="blue" x="352" y="538" textLength="257" lengthAdjust="spacingAndGlyphs">Вниз, откат вверх, без остановки вниз</text>
<text class="blue" x="505" y="595" textLength="257" lengthAdjust="spacingAndGlyphs">Вниз, откат вверх, без остановки вниз</text>
<text x="466" y="567" textLength="271" lengthAdjust="spacingAndGlyphs" style="font-family:'DejaVu Sans',sans-serif;font-size:14.500px;fill:#e0207f;stroke:#e0207f;stroke-width:.2">Вниз, откат вверх, остановка, вниз</text>
<text x="382" y="568" style="font-family:'Liberation Serif',serif;font-size:20px;fill:#1a3ae8;stroke:#1a3ae8;stroke-width:.3" textLength="26" lengthAdjust="spacingAndGlyphs">-14</text>
<ellipse cx="438" cy="575" rx="38" ry="11" fill="none" stroke="#f030d0" stroke-width="2"/>
<path d="M599 492H583M590 485l-7 7 7 7" fill="none" stroke="#000" stroke-width="1.500"/>
<!-- tabs -->
<rect x="27" y="717" width="72" height="21" fill="#fff"/><rect x="26" y="717" width="1" height="21" fill="#000"/>
<text x="33" y="732" style="font-size:13px;fill:#222" textLength="53">ES 06-20</text>
<rect x="100" y="717" width="23" height="20" fill="#d0d0d0"/><path d="M106 727h11M111.500 722v11" stroke="#333" stroke-width="2"/>

<!-- TASKBAR -->
<rect x="0" y="738" width="1366" height="30" fill="#28353c"/>
<path d="M5 743l12-1.700v11.200H5zM18.500 741.100L31 740v12.500H18.500zM5 754h12v11.200l-12-1.700zM18.500 754H31v11.500l-12.500-1.500z" fill="#fff"/>
<circle cx="57" cy="749" r="5.500" fill="none" stroke="#eee" stroke-width="1.300"/><path d="M53 753l-6 7" stroke="#eee" stroke-width="1.500"/>
<rect x="82" y="748" width="16" height="13" fill="#f4c840"/><rect x="82" y="746" width="7" height="3" fill="#e0a820"/><rect x="86" y="755" width="8" height="6" fill="#2a80d0"/>
<rect x="115" y="748" width="14" height="14" fill="#fff"/><path d="M119 748a3 3 0 0 1 6 0" stroke="#fff" fill="none"/><rect x="118" y="751" width="3" height="3" fill="#e03020"/><rect x="122" y="751" width="3" height="3" fill="#60b030"/><rect x="118" y="755" width="3" height="3" fill="#2080e0"/><rect x="122" y="755" width="3" height="3" fill="#f0c000"/>
<circle cx="156" cy="753" r="7.500" fill="#e04030"/><path d="M156 753L150 758A7.500 7.500 0 0 0 163 756z" fill="#40a040"/><path d="M156 745.500A7.500 7.500 0 0 1 163 756L156 753z" fill="#f0c020"/><circle cx="156" cy="753" r="3.500" fill="#3080e0" stroke="#fff"/>
<rect x="177" y="738" width="85" height="30" fill="#303e46"/><rect x="177" y="766" width="85" height="2" fill="#b8a888"/>
<rect x="179" y="745" width="15" height="15" fill="#1a4fa0" stroke="#cfe0f0"/><text x="181" y="757" style="font-size:12px;font-weight:700;fill:#fff">W</text>
<text class="tk" x="199" y="757" textLength="61">Расисани...</text>
<rect x="275" y="745" width="16" height="15" fill="#e8f0e8" stroke="#207040"/><text x="278" y="757" style="font-size:12px;font-weight:700;fill:#207040">X</text>
<circle cx="316" cy="753" r="8" fill="#f0c860"/><circle cx="313" cy="749" r="1.800" fill="#e03030"/><circle cx="319" cy="749" r="1.800" fill="#3080d0"/><circle cx="312" cy="755" r="1.800" fill="#30a040"/>
<rect x="342" y="745" width="14" height="15" rx="6" fill="#1090e0"/><text x="345" y="757" style="font-size:11px;font-weight:700;fill:#fff">S</text>
<path d="M374 745h12l4 8-4 8h-12z" fill="#eee"/><text x="377" y="757" style="font-size:11px;font-weight:700;fill:#e02020">Я</text>
<path d="M409 762c2-9 7-15 15-18-1 8-6 14-13 15z" fill="#9060c0"/>
<rect x="440" y="747" width="16" height="13" fill="#2090e0"/><path d="M440 747l8 7 8-7" fill="#fff"/>
<rect x="473" y="745" width="11" height="10" fill="#e8e8e8" stroke="#6080a0"/><rect x="475" y="747" width="7" height="6" fill="#2060c0"/><path d="M475 758h9" stroke="#ccc" stroke-width="2"/><circle cx="484" cy="758" r="3.500" fill="#30a040"/>
<g fill="#c8c8c8"><circle cx="510" cy="752" r="6" fill="#8a5a50"/><circle cx="513" cy="752" r="4.500" fill="#ddd"/><rect x="514" y="754" width="4" height="6" fill="#eee"/></g>
<text class="tk" x="524" y="757" textLength="59">Центр уп...</text><rect x="502" y="766" width="85" height="2" fill="#b8a888"/>
<circle cx="603" cy="752" r="6" fill="#8a5a50"/><circle cx="606" cy="752" r="4.500" fill="#ddd"/><rect x="607" y="754" width="4" height="6" fill="#eee"/>
<text class="tk" x="617" y="757" textLength="60">График - ...</text><rect x="595" y="766" width="85" height="2" fill="#b8a888"/>
<circle cx="696" cy="752" r="6" fill="#8a5a50"/><circle cx="699" cy="752" r="4.500" fill="#ddd"/><rect x="700" y="754" width="4" height="6" fill="#eee"/>
<text class="tk" x="710" y="757" textLength="58">График - ...</text><rect x="688" y="766" width="84" height="2" fill="#b8a888"/>
<rect x="776" y="738" width="93" height="30" fill="#4a5a62"/><rect x="776" y="766" width="93" height="2" fill="#b8a888"/>
<circle cx="788" cy="752" r="6" fill="#8a5a50"/><circle cx="791" cy="752" r="4.500" fill="#ddd"/><rect x="792" y="754" width="4" height="6" fill="#eee"/>
<text class="tk" x="803" y="757" textLength="60">График - ...</text>
<circle cx="883" cy="750" r="5" fill="#e0a030"/><circle cx="878" cy="756" r="3.500" fill="#3a9a3a"/><circle cx="888" cy="756" r="3.500" fill="#3070c0"/>
<text class="tk" x="897" y="757" textLength="57">1140851 - ...</text><rect x="872" y="766" width="86" height="2" fill="#b8a888"/>
<!-- tray -->
<rect x="1027" y="745" width="15" height="15" rx="6" fill="#1090e0"/><text x="1031" y="757" style="font-size:11px;font-weight:700;fill:#fff">S</text>
<path d="M1052 746h12v8l-6 6-6-6z" fill="#fff" stroke="#222"/><path d="M1060 752l5 8h-10z" fill="#f0c020"/>
<circle cx="1083" cy="753" r="6" fill="#e04030"/><path d="M1083 753L1078 757A6 6 0 0 0 1089 755z" fill="#40a040"/><circle cx="1083" cy="753" r="2.500" fill="#3080e0" stroke="#fff"/>
<circle cx="1106" cy="753" r="7" fill="#d82030"/><path d="M1102 749l8 8M1110 749l-8 8M1106 747v12" stroke="#fff"/>
<rect x="1124" y="745" width="14" height="16" fill="#3080c0"/><rect x="1127" y="748" width="8" height="8" fill="#90c8e8"/>
<rect x="1149" y="745" width="12" height="11" fill="#888"/><path d="M1149 759h4M1156 759h4" stroke="#aaa" stroke-width="2"/>
<rect x="1176" y="750" width="12" height="9" fill="none" stroke="#ddd"/><rect x="1177" y="752" width="6" height="6" fill="#eee"/><path d="M1172 746l4 5" stroke="#eee"/>
<path d="M1198 760a14 14 0 0 1 14-14M1202 760a10 10 0 0 1 10-10M1206 760a6 6 0 0 1 6-6" fill="none" stroke="#ddd"/>
<path d="M1220 750h3l4-3v12l-4-3h-3z" fill="none" stroke="#ddd"/><path d="M1230 749a6 6 0 0 1 0 8M1232 746a10 10 0 0 1 0 14" fill="none" stroke="#ddd"/>
<text class="tk" x="1246" y="757" textLength="22">ENG</text><text class="tk" x="1281" y="757" textLength="27">14:50</text>
<path d="M1326.500 746.500h15v11h-4l-3 3v-3h-8z" fill="none" stroke="#eee"/>
</svg>
</body></html>
